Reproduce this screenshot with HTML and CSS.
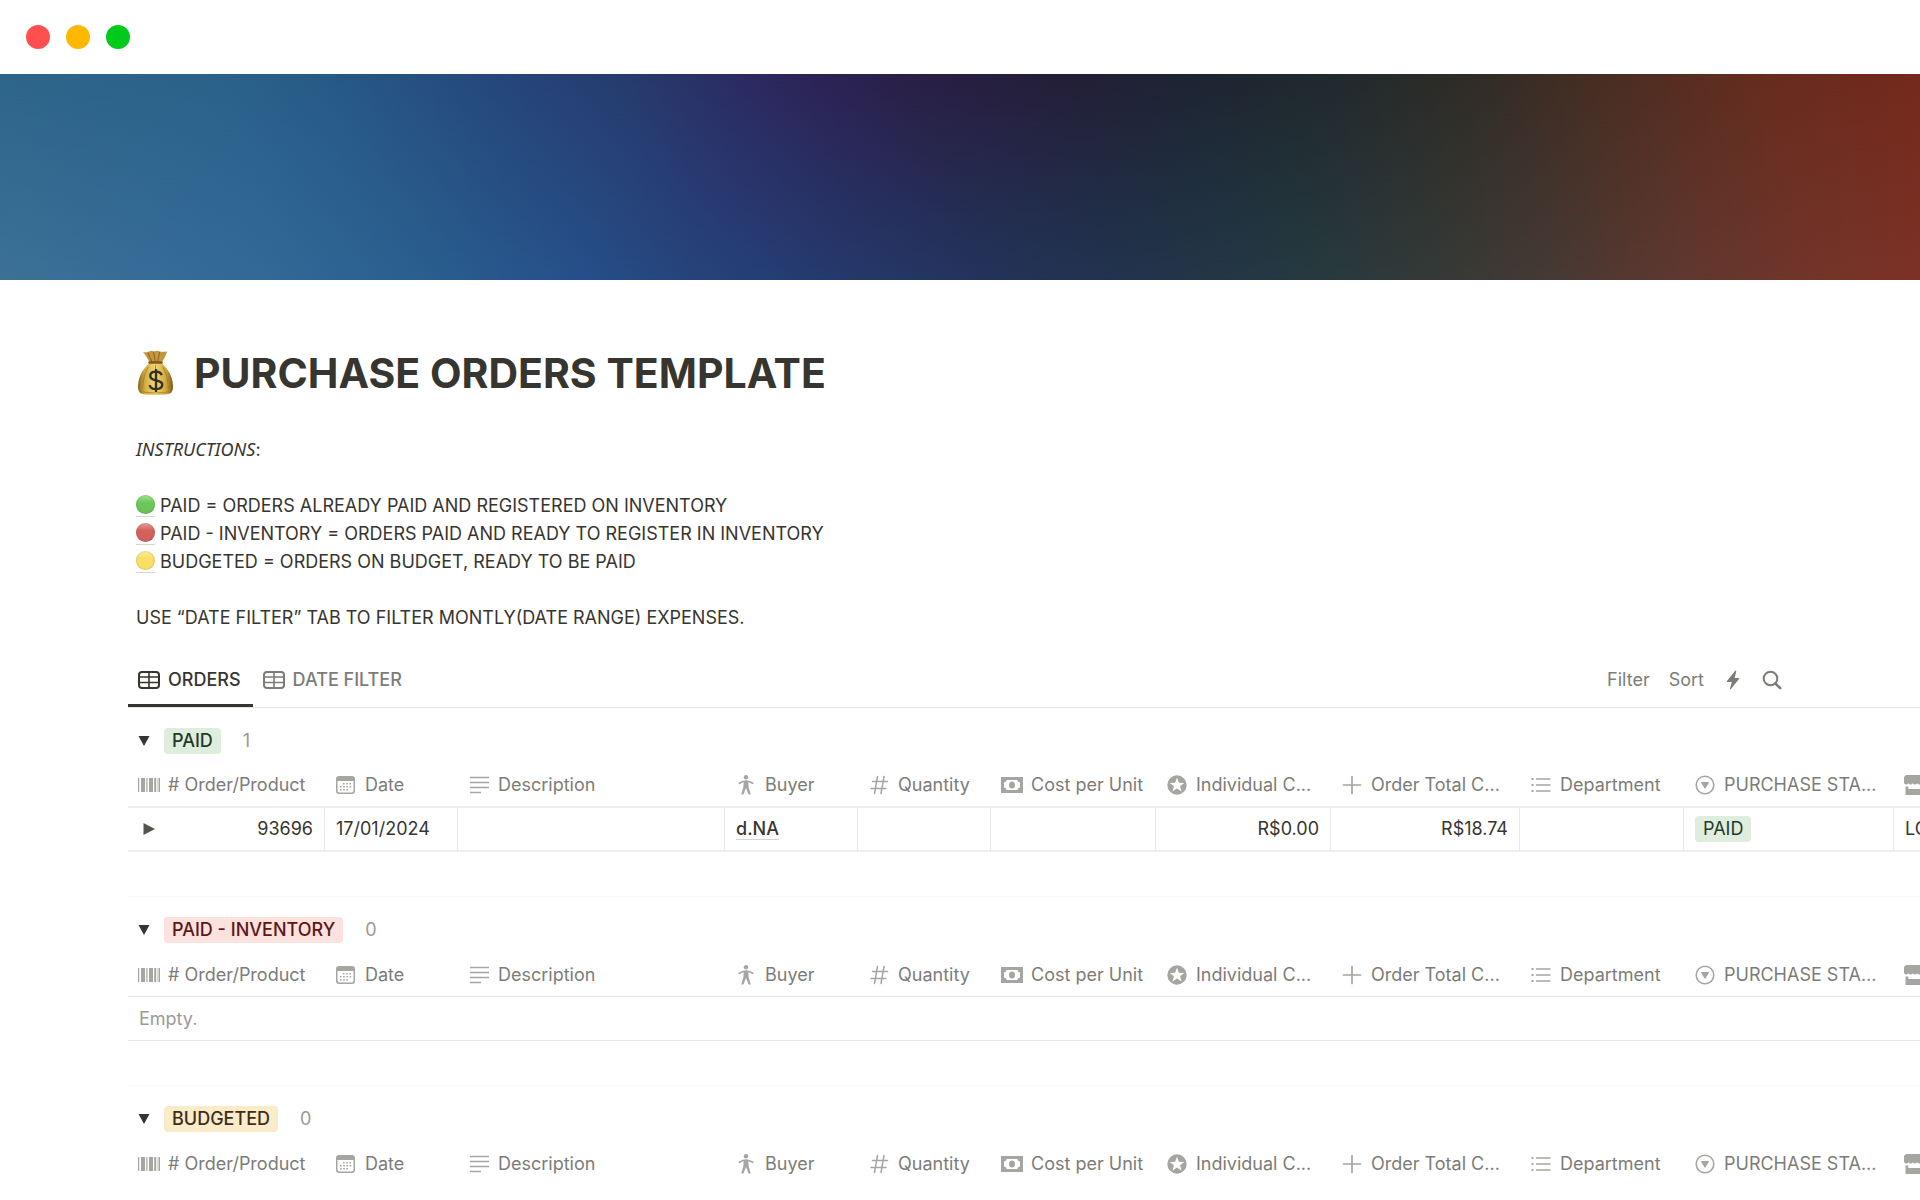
FILE: index.html
```html
<!DOCTYPE html>
<html lang="en">
<head>
  <meta charset="UTF-8">
  <meta name="viewport" content="width=device-width, initial-scale=1">
  <title>Purchase Orders Template</title>
  <link rel="stylesheet" href="styles.css">
</head>
<body>

<!-- Icon set -->
<svg class="icon-defs" aria-hidden="true">
  <symbol id="i-table" viewBox="0 0 22 18">
    <rect x="1" y="1" width="20" height="16" rx="3" fill="none" stroke="currentColor" stroke-width="2"/>
    <path d="M1 6h20M1 11.500h20M11 1v16" fill="none" stroke="currentColor" stroke-width="1.600"/>
  </symbol>
  <symbol id="i-barcode" viewBox="0 0 22 16">
    <path d="M0 1h1.200v14H0zM3 1h4v14H3zM8.300 1h1.200v14H8.300zM11 1h4v14h-4zM16.200 1h1.800v14h-1.800zM20.500 1H22v14h-1.500zM18.800 1h.600v14h-.600z" fill="currentColor"/>
  </symbol>
  <symbol id="i-date" viewBox="0 0 22 18">
    <path fill-rule="evenodd" d="M4 0h13a3 3 0 0 1 3 3v12a3 3 0 0 1-3 3H4a3 3 0 0 1-3-3V3a3 3 0 0 1 3-3zM2.500 5v9.500a2 2 0 0 0 2 2h12a2 2 0 0 0 2-2V5z" fill="currentColor"/>
    <path d="M8 7.700h9M5 10.700h12M5 13.700h9" fill="none" stroke="currentColor" stroke-width="1.600" stroke-dasharray="1.600 1.600"/>
  </symbol>
  <symbol id="i-text" viewBox="0 0 22 18">
    <path d="M2 1.500h19M2 6.500h19M2 11.500h19M2 16.500h11" fill="none" stroke="currentColor" stroke-width="1.700"/>
  </symbol>
  <symbol id="i-person" viewBox="0 0 22 20">
    <circle cx="11" cy="2.200" r="2.200" fill="currentColor"/>
    <path d="M4.300 8.300C7.500 6.500 9 6 11 6s3.500.500 6.700 2.300" fill="none" stroke="currentColor" stroke-width="1.700" stroke-linecap="round"/>
    <path d="M8.700 6h4.600l.300 6 2.200 7.600h-2.200L11 13l-2.600 6.600H6.200L8.400 12z" fill="currentColor"/>
  </symbol>
  <symbol id="i-hash" viewBox="0 0 22 18">
    <path d="M4.500 5.500h15M3 12.500h15M9.500.500l-3 17M16 .500l-3 17" fill="none" stroke="currentColor" stroke-width="1.500" stroke-linecap="round"/>
  </symbol>
  <symbol id="i-cash" viewBox="0 0 22 16">
    <path fill-rule="evenodd" d="M0 0h22v16H0zM5.500 3C5.500 4.500 4.300 5.300 3 5.500v5c1.300.200 2.500 1 2.500 2.500h11c0-1.500 1.200-2.300 2.500-2.500v-5c-1.300-.200-2.500-1-2.500-2.500z" fill="currentColor"/>
    <ellipse cx="11" cy="8" rx="3" ry="3.500" fill="currentColor"/>
  </symbol>
  <symbol id="i-star" viewBox="0 0 22 20">
    <path fill-rule="evenodd" d="M11 .300a9.700 9.700 0 1 1 0 19.400a9.700 9.700 0 0 1 0-19.400zM11 2.800L9.100 7.700l-5.300.300L7.900 11.300l-1.400 5.100L11 13.500l4.500 2.900-1.400-5.100L18.200 8l-5.300-.300z" fill="currentColor"/>
  </symbol>
  <symbol id="i-plus" viewBox="0 0 22 18">
    <path d="M2.500 9h17M11 .500v17" fill="none" stroke="currentColor" stroke-width="1.700" stroke-linecap="round"/>
  </symbol>
  <symbol id="i-list" viewBox="0 0 22 16">
    <path d="M6 2h14.500M6 8h14.500M6 14h14.500" fill="none" stroke="currentColor" stroke-width="1.700"/>
    <path d="M1.500 1h2v2h-2zM1.500 7h2v2h-2zM1.500 13h2v2h-2z" fill="currentColor"/>
  </symbol>
  <symbol id="i-select" viewBox="0 0 22 20">
    <circle cx="11" cy="10" r="8.800" fill="none" stroke="currentColor" stroke-width="1.600"/>
    <path d="M7.500 7h7q.800 0 .400.800l-3.300 5.400q-.600.700-1.200 0L7.100 7.800Q6.700 7 7.500 7z" fill="currentColor"/>
  </symbol>
  <symbol id="i-store" viewBox="0 0 22 20">
    <path d="M2 0h18l2 2v5.500a2.300 2.300 0 0 1-4.400.700 2.500 2.500 0 0 1-4.400 0 2.500 2.500 0 0 1-4.400 0 2.500 2.500 0 0 1-4.400 0A2.300 2.300 0 0 1 0 7.500V2z" fill="currentColor"/>
    <path d="M1.500 11.500h2.800V14h13.400v-2.500h2.800V20h-19z" fill="currentColor"/>
  </symbol>
  <symbol id="i-down" viewBox="0 0 12 10">
    <path d="M.500 0h11L6 10z" fill="currentColor"/>
  </symbol>
  <symbol id="i-right" viewBox="0 0 12 14">
    <path d="M.500 1v12L12 7z" fill="currentColor"/>
  </symbol>
</svg>

<header class="window-bar">
  <span class="dot dot-red"></span>
  <span class="dot dot-yellow"></span>
  <span class="dot dot-green"></span>
</header>

<div class="cover"></div>

<main class="page">
  <div class="intro">
    <h1 class="title">
      <svg class="title-icon" viewBox="0 0 38 46" aria-hidden="true">
        <defs>
          <linearGradient id="bag" x1="0" x2="1" y1="0" y2="0">
            <stop offset="0" stop-color="#8a651c"/>
            <stop offset=".2" stop-color="#d3ad45"/>
            <stop offset=".5" stop-color="#f2d873"/>
            <stop offset=".8" stop-color="#cfa63e"/>
            <stop offset="1" stop-color="#7c5818"/>
          </linearGradient>
        </defs>
        <path d="M7 2.500q4 1 5.500-.500 2.500-1.500 5 0 3-1.500 5.500 0 3 .800 7.500 0-1.500 4.500-5.500 11H13.500Q9.500 6 7 2.500z" fill="#c3963f"/>
        <path d="M11.500 3l4.500 10M17 2.500l2 10.500M23 2.500L21 13" stroke="#8f6720" fill="none"/>
        <path d="M13 13h12c4 4 9 10 10.500 18 .800 5 1 9-1.500 11.500-3 2.500-27 2.500-30 0C1.500 40 1.700 36 2.500 31 4 23 9 17 13 13z" fill="url(#bag)"/>
        <path d="M12 17Q7 25 6.500 38M26 17q5 8 5.500 21M19 15v6M4 41q15 3 30 0" stroke="#a67d29" stroke-width=".8" fill="none"/>
        <rect x="12" y="11.500" width="14" height="2.500" rx="1.200" fill="#84561b"/>
        <path d="M25 25c-.800-2.300-2.800-3.300-5.500-3.300-3.300 0-5.600 1.600-5.600 4.200 0 6 11.700 2.900 11.700 8.400 0 2.800-2.500 4.400-6.100 4.400-3.500 0-5.800-1.500-6.200-3.900M19.500 19v22.500" stroke="#343025" stroke-width="2.300" fill="none"/>
      </svg>
      PURCHASE ORDERS TEMPLATE
    </h1>

    <p class="text"><em>INSTRUCTIONS</em>:</p>
    <ul class="legend">
      <li><span class="mark"><span class="ball ball-green"></span></span>PAID = ORDERS ALREADY PAID AND REGISTERED ON INVENTORY</li>
      <li><span class="mark"><span class="ball ball-red"></span></span>PAID - INVENTORY = ORDERS PAID AND READY TO REGISTER IN INVENTORY</li>
      <li><span class="mark"><span class="ball ball-yellow"></span></span>BUDGETED = ORDERS ON BUDGET, READY TO BE PAID</li>
    </ul>
    <p class="text last">USE “DATE FILTER” TAB TO FILTER MONTLY(DATE RANGE) EXPENSES.</p>
  </div>

  <section class="database">
    <nav class="toolbar">
      <div class="tabs">
        <button type="button" class="tab active"><svg class="tab-icon"><use href="#i-table"/></svg>ORDERS</button>
        <button type="button" class="tab"><svg class="tab-icon"><use href="#i-table"/></svg>DATE FILTER</button>
      </div>
      <div class="actions">
        <button type="button">Filter</button>
        <button type="button">Sort</button>
        <button type="button" aria-label="Automations">
          <svg class="action-icon" viewBox="0 0 20 20"><path d="M12 1q.700-.900 1.300 0L11.700 8h4q.900.200.300 1L8 19q-.800.700-1-.200L8.800 12H4.300q-.800-.200-.300-1z" fill="currentColor"/></svg>
        </button>
        <button type="button" aria-label="Search">
          <svg class="action-icon" viewBox="0 0 20 20"><circle cx="8.500" cy="8.500" r="6.800" fill="none" stroke="currentColor" stroke-width="2"/><path d="M13.500 13.500l4.700 4.700" stroke="currentColor" stroke-width="2.600" stroke-linecap="round"/></svg>
        </button>
      </div>
    </nav>

    <!-- Paid -->
    <section class="group">
      <div class="group-head">
        <button type="button" class="toggle" aria-label="Collapse group"><svg class="caret"><use href="#i-down"/></svg></button>
        <span class="tag tag-green">PAID</span>
        <span class="count">1</span>
      </div>
      <table class="orders filled">
        <colgroup>
          <col class="c-order"><col class="c-date"><col class="c-desc"><col class="c-buyer"><col class="c-qty"><col class="c-unit">
          <col class="c-cost"><col class="c-total"><col class="c-dept"><col class="c-status"><col class="c-store">
        </colgroup>
        <thead>
          <tr>
            <th><span class="head"><svg class="icon"><use href="#i-barcode"/></svg># Order/Product</span></th>
            <th><span class="head"><svg class="icon"><use href="#i-date"/></svg>Date</span></th>
            <th><span class="head"><svg class="icon"><use href="#i-text"/></svg>Description</span></th>
            <th><span class="head"><svg class="icon"><use href="#i-person"/></svg>Buyer</span></th>
            <th><span class="head"><svg class="icon"><use href="#i-hash"/></svg>Quantity</span></th>
            <th><span class="head"><svg class="icon"><use href="#i-cash"/></svg>Cost per Unit</span></th>
            <th><span class="head"><svg class="icon"><use href="#i-star"/></svg>Individual C...</span></th>
            <th><span class="head"><svg class="icon"><use href="#i-plus"/></svg>Order Total C...</span></th>
            <th><span class="head"><svg class="icon"><use href="#i-list"/></svg>Department</span></th>
            <th><span class="head"><svg class="icon"><use href="#i-select"/></svg>PURCHASE STA...</span></th>
            <th><span class="head"><svg class="icon"><use href="#i-store"/></svg></span></th>
          </tr>
        </thead>
        <tbody>
          <tr>
            <td>
              <div class="order-cell">
                <button type="button" class="toggle" aria-label="Expand row"><svg class="expand"><use href="#i-right"/></svg></button>
                <span>93696</span>
              </div>
            </td>
            <td>17/01/2024</td>
            <td></td>
            <td><a class="buyer" href="#">d.NA</a></td>
            <td></td>
            <td></td>
            <td class="number">R$0.00</td>
            <td class="number">R$18.74</td>
            <td></td>
            <td><span class="tag tag-green tag-cell">PAID</span></td>
            <td>LO</td>
          </tr>
        </tbody>
      </table>
    </section>

    <!-- Paid - Inventory -->
    <section class="group">
      <div class="group-head">
        <button type="button" class="toggle" aria-label="Collapse group"><svg class="caret"><use href="#i-down"/></svg></button>
        <span class="tag tag-red">PAID - INVENTORY</span>
        <span class="count">0</span>
      </div>
      <table class="orders">
        <colgroup>
          <col class="c-order"><col class="c-date"><col class="c-desc"><col class="c-buyer"><col class="c-qty"><col class="c-unit">
          <col class="c-cost"><col class="c-total"><col class="c-dept"><col class="c-status"><col class="c-store">
        </colgroup>
        <thead>
          <tr>
            <th><span class="head"><svg class="icon"><use href="#i-barcode"/></svg># Order/Product</span></th>
            <th><span class="head"><svg class="icon"><use href="#i-date"/></svg>Date</span></th>
            <th><span class="head"><svg class="icon"><use href="#i-text"/></svg>Description</span></th>
            <th><span class="head"><svg class="icon"><use href="#i-person"/></svg>Buyer</span></th>
            <th><span class="head"><svg class="icon"><use href="#i-hash"/></svg>Quantity</span></th>
            <th><span class="head"><svg class="icon"><use href="#i-cash"/></svg>Cost per Unit</span></th>
            <th><span class="head"><svg class="icon"><use href="#i-star"/></svg>Individual C...</span></th>
            <th><span class="head"><svg class="icon"><use href="#i-plus"/></svg>Order Total C...</span></th>
            <th><span class="head"><svg class="icon"><use href="#i-list"/></svg>Department</span></th>
            <th><span class="head"><svg class="icon"><use href="#i-select"/></svg>PURCHASE STA...</span></th>
            <th><span class="head"><svg class="icon"><use href="#i-store"/></svg></span></th>
          </tr>
        </thead>
        <tbody>
          <tr><td class="empty" colspan="11">Empty.</td></tr>
        </tbody>
      </table>
    </section>

    <!-- Budgeted -->
    <section class="group">
      <div class="group-head">
        <button type="button" class="toggle" aria-label="Collapse group"><svg class="caret"><use href="#i-down"/></svg></button>
        <span class="tag tag-yellow">BUDGETED</span>
        <span class="count">0</span>
      </div>
      <table class="orders">
        <colgroup>
          <col class="c-order"><col class="c-date"><col class="c-desc"><col class="c-buyer"><col class="c-qty"><col class="c-unit">
          <col class="c-cost"><col class="c-total"><col class="c-dept"><col class="c-status"><col class="c-store">
        </colgroup>
        <thead>
          <tr>
            <th><span class="head"><svg class="icon"><use href="#i-barcode"/></svg># Order/Product</span></th>
            <th><span class="head"><svg class="icon"><use href="#i-date"/></svg>Date</span></th>
            <th><span class="head"><svg class="icon"><use href="#i-text"/></svg>Description</span></th>
            <th><span class="head"><svg class="icon"><use href="#i-person"/></svg>Buyer</span></th>
            <th><span class="head"><svg class="icon"><use href="#i-hash"/></svg>Quantity</span></th>
            <th><span class="head"><svg class="icon"><use href="#i-cash"/></svg>Cost per Unit</span></th>
            <th><span class="head"><svg class="icon"><use href="#i-star"/></svg>Individual C...</span></th>
            <th><span class="head"><svg class="icon"><use href="#i-plus"/></svg>Order Total C...</span></th>
            <th><span class="head"><svg class="icon"><use href="#i-list"/></svg>Department</span></th>
            <th><span class="head"><svg class="icon"><use href="#i-select"/></svg>PURCHASE STA...</span></th>
            <th><span class="head"><svg class="icon"><use href="#i-store"/></svg></span></th>
          </tr>
        </thead>
      </table>
    </section>
  </section>
</main>

</body>
</html>
```
FILE: styles.css
```css
* { box-sizing: border-box; }
html, body { height: 100%; }
body {
  margin: 0;
  overflow: hidden;
  background: #fff;
  color: #37352f;
  font-family: Inter, "Liberation Sans", sans-serif;
  font-size: 18px;
  line-height: 28px;
}
button { padding: 0; border: 0; background: none; color: inherit; font: inherit; cursor: pointer; }
svg { display: block; flex: none; }
.icon-defs { position: absolute; width: 0; height: 0; }

/* Window bar */
.window-bar { display: flex; align-items: center; gap: 16px; height: 74px; padding: 0 26px; }
.dot { width: 24px; height: 24px; border-radius: 50%; }
.dot-red { background: #ff4f4f; }
.dot-yellow { background: #ffb700; }
.dot-green { background: #00ca1b; }

/* Cover: one gradient for the bottom edge, a second fading in towards the top */
.cover {
  position: relative;
  height: 206px;
  background: linear-gradient(90deg, #3d7197 0%, #326998 14%, #2a5f90 22%, #26508a 30%, #26447c 36%, #25396c 44%, #23345c 51%, #21344e 58%, #243a42 67%, #333a38 74%, #473a34 81%, #61382f 88%, #75342a 95%, #7c3225 100%);
}
.cover::before {
  content: "";
  position: absolute;
  inset: 0;
  background: linear-gradient(90deg, #2e648a 0%, #2a6189 12%, #275884 18%, #25467a 26%, #273a6c 33%, #2c2961 39%, #2c2254 43%, #2a1e44 48%, #241e38 55%, #1d2432 62%, #20292d 69%, #302c26 77%, #4a2d22 84%, #662c1e 92%, #742a1c 100%);
  mask-image: linear-gradient(#000, transparent);
}

/* Intro */
.page { padding-left: 128px; }
.intro { padding: 64px 128px 0 8px; }
.title { display: flex; align-items: center; gap: 19px; margin: 0 0 34px; font-size: 41px; line-height: 58px; font-weight: 700; }
.title-icon { width: 39px; height: 48px; }
.text { margin: 0; padding-bottom: 28px; }
.text.last { padding-bottom: 20px; }
.text em { font-family: "Noto Sans", sans-serif; line-height: 20px; }
.legend { margin: 0; padding: 0 0 28px; list-style: none; }
.legend li { display: flex; align-items: center; gap: 5px; }
.mark { padding-bottom: 2px; border-bottom: 1px solid #d4d4d1; }
.ball { display: block; width: 19px; height: 19px; border-radius: 50%; box-shadow: inset 0 0 2px #00000040; }
.ball-green { background: linear-gradient(#a2e78d, #6ec75a 40%, #6ac257); }
.ball-red { background: linear-gradient(#ea9c96, #d2605c 40%, #d0615e); }
.ball-yellow { background: linear-gradient(#fbef9d, #f9de66 40%, #fadf62); }

/* Tabs */
.database { overflow: hidden; }
.toolbar { display: flex; justify-content: space-between; height: 56px; padding-right: 138px; border-bottom: 1px solid #e6e6e4; }
.tabs { display: flex; }
.tab { display: flex; align-items: center; gap: 8px; padding: 4px 12px 0 10px; color: #7d7c78; font-weight: 500; border-bottom: 3px solid transparent; }
.tab.active { color: #37352f; border-bottom-color: #37352f; }
.tab-icon { width: 22px; height: 18px; }
.actions { display: flex; align-items: center; gap: 19px; color: #7d7c78; }
.action-icon { width: 20px; height: 20px; }

/* Groups */
.group { padding: 20px 0 44px; }
.group + .group { border-top: 1px solid #f9f9f8; }
.group-head { display: flex; align-items: center; height: 26px; margin-bottom: 10px; padding-left: 10px; }
.caret { width: 12px; height: 10px; }
.group-head .tag { margin: 0 22px 0 14px; font-weight: 500; }
.tag { display: inline-block; padding: 0 8px; border-radius: 4px; line-height: 26px; }
.tag-green { background: #dfeddd; color: #1f3a2b; }
.tag-red { background: #fbe2df; color: #5d1715; }
.tag-yellow { background: #faebc9; color: #402c1b; }
.count { color: #9b9a97; }

/* Tables */
.orders { width: 1975px; table-layout: fixed; border-collapse: separate; border-spacing: 0; }
.orders th, .orders td { height: 44px; padding: 0 11px; border-bottom: 1px solid #e6e6e4; white-space: nowrap; text-align: left; font-weight: 400; }
.orders th:first-child { padding-left: 10px; }
.filled th, .filled td { border-bottom: 2px solid #eeeeed; }
.filled td + td { border-left: 1px solid #e9e9e7; }
.group:last-child th { border-bottom: 0; }
.head { display: flex; align-items: center; gap: 8px; color: #7d7c78; }
.icon { width: 22px; height: 20px; color: #a5a5a1; }
.order-cell { display: flex; justify-content: space-between; align-items: center; padding-left: 4px; }
.expand { width: 12px; height: 14px; color: #55534e; }
.orders .number { text-align: right; }
.orders .empty { color: #9b9a97; }
.buyer { color: inherit; font-weight: 500; text-decoration: none; border-bottom: 1px solid #d4d4d1; }

.c-order { width: 196px; }
.c-date, .c-buyer { width: 133px; }
.c-qty { width: 133px; }
.c-desc { width: 267px; }
.c-unit { width: 165px; }
.c-cost { width: 175px; }
.c-total { width: 189px; }
.c-dept { width: 164px; }
.c-status, .c-store { width: 210px; }
```
